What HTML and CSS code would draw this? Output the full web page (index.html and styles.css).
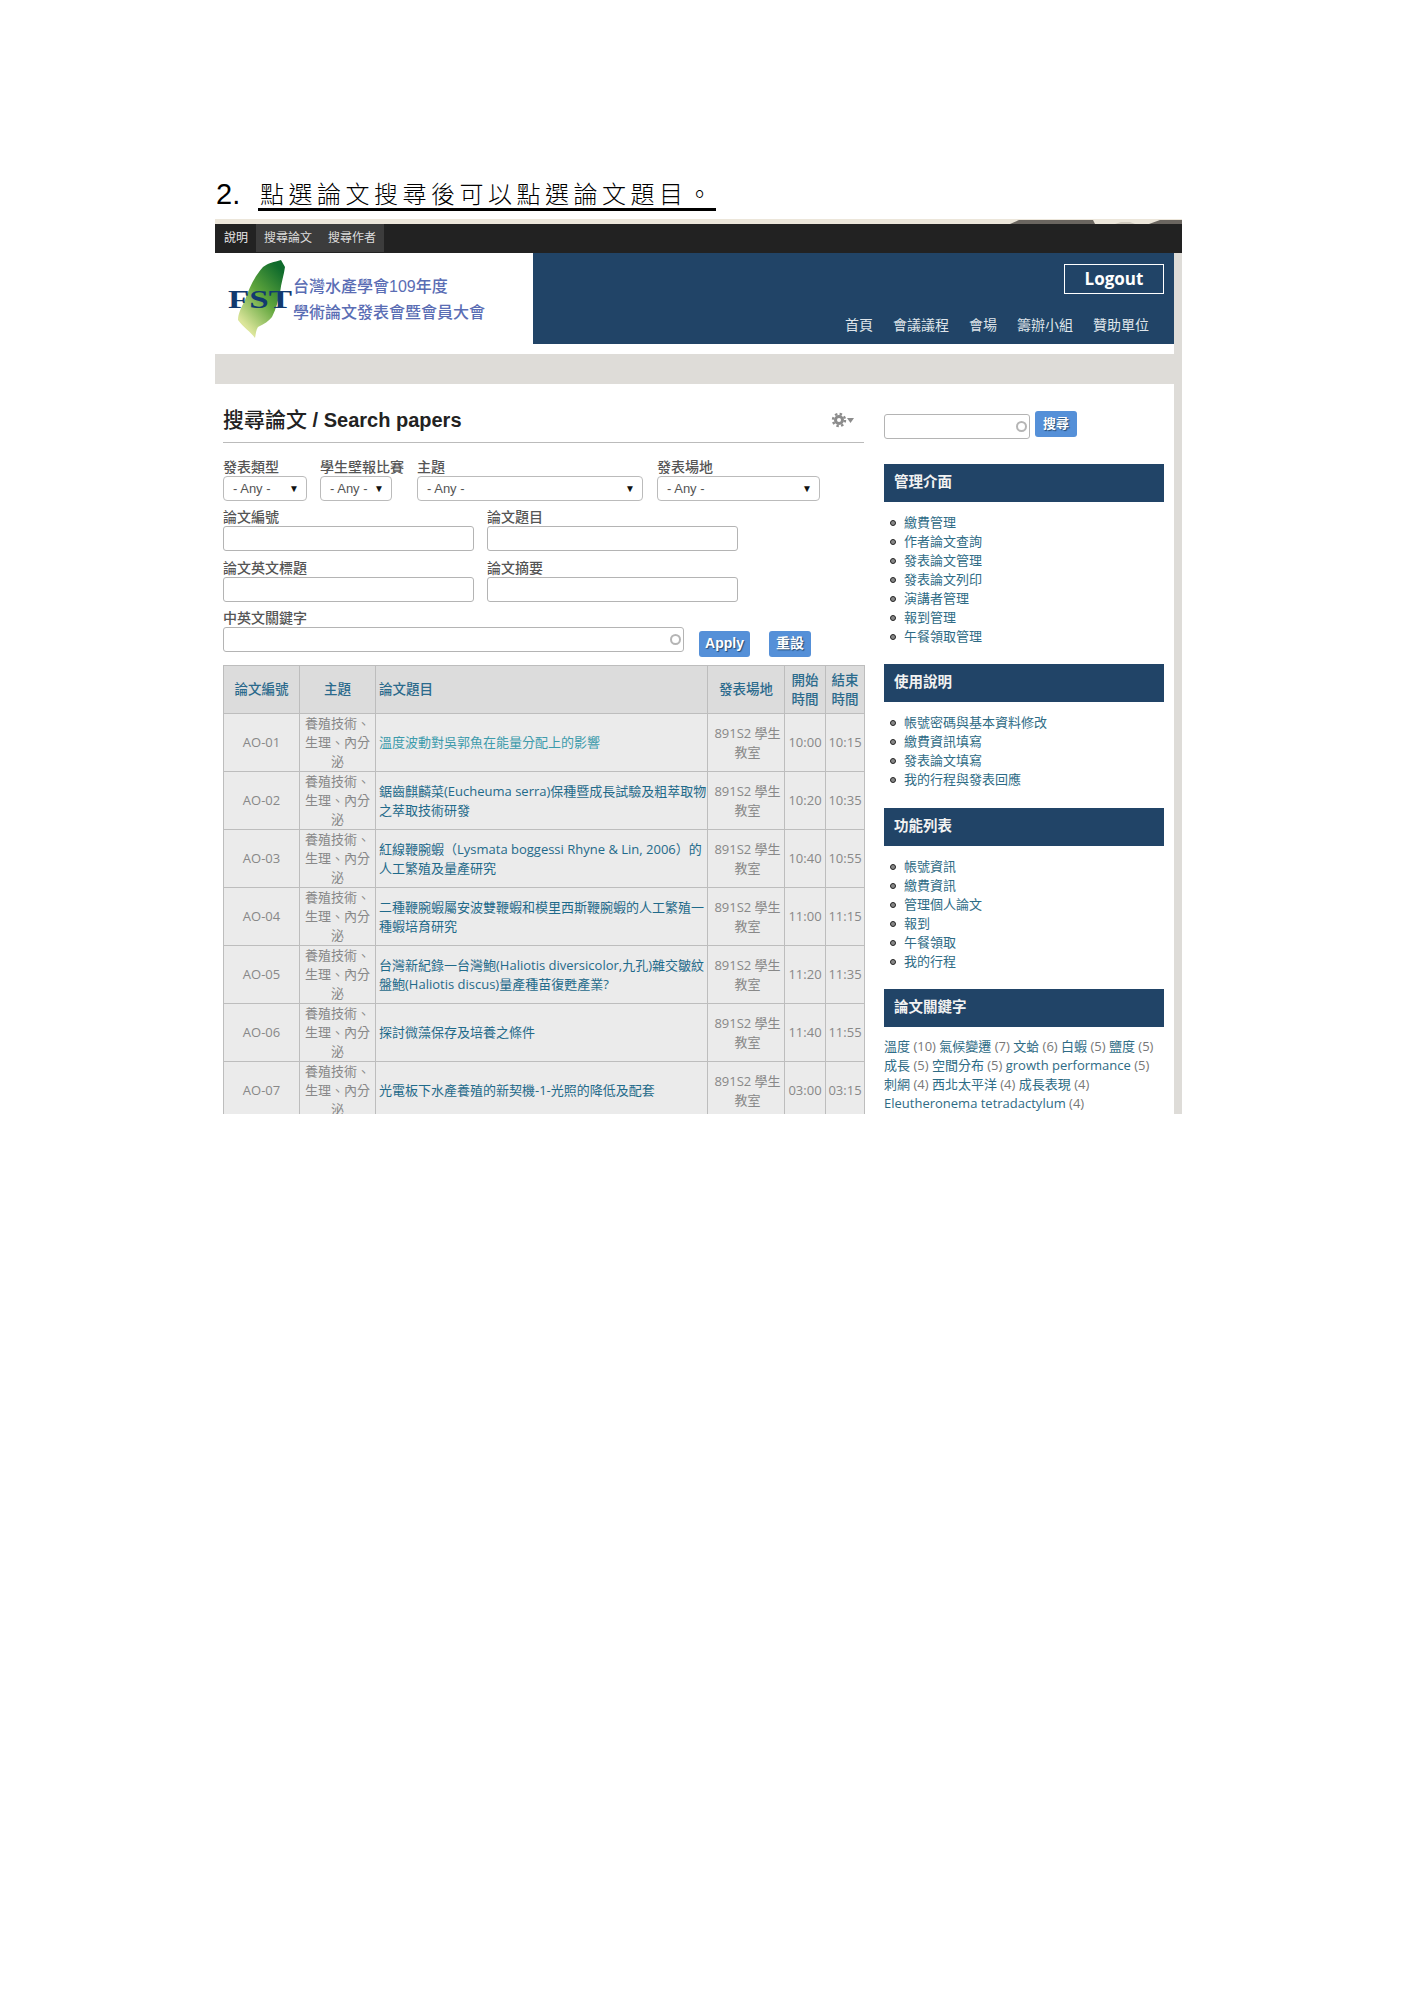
FILE: index.html
```html
<!DOCTYPE html>
<html lang="zh-Hant">
<head>
  <meta charset="UTF-8">
  <title>搜尋論文 / Search papers</title>
  <link rel="stylesheet" href="styles.css">
</head>
<body>
  <div class="sheet">
    <div class="doc-title">
      <span class="doc-num">2.</span>
      <span class="doc-text">點選論文搜尋後可以點選論文題目。</span>
    </div>

    <div class="web">
      <svg class="top-band" width="967" height="5" viewBox="0 0 967 5">
        <polygon points="795,5 804,1 878,1 880,5" fill="#6b6660"/>
        <polygon points="900,5 906,3 915,3 920,5" fill="#cfc9bd"/>
        <polygon points="934,5 945,1 967,1 967,5" fill="#6b6660"/>
      </svg>
      <div class="black-bar">
        <a class="tab">說明</a>
        <div class="tab-group">
          <a class="tab">搜尋論文</a>
          <a class="tab">搜尋作者</a>
        </div>
      </div>

      <div class="inner">
        <div class="header">
          <div class="logo">
            <svg class="logo-mark" width="67" height="91" viewBox="0 0 67 91">
              <defs>
                <linearGradient id="tw" x1="0.8" y1="0.05" x2="0.25" y2="0.9">
                  <stop offset="0" stop-color="#0f6b2c"/>
                  <stop offset="0.5" stop-color="#5fa53c"/>
                  <stop offset="1" stop-color="#dbe59a"/>
                </linearGradient>
              </defs>
              <path d="M55 7 C48 9 42 10 37 14 C28 24 23 36 19 47 C15 55 12 61 12 67 C17 74 25 79 29 85 C30 80 30 77 32 74 C38 71 43 68 46 64 C50 56 52 48 54 40 C55 30 58 22 59 14 Z" fill="url(#tw)"/>
              <text class="logo-fst" x="2" y="55" textLength="64" lengthAdjust="spacingAndGlyphs">FST</text>
            </svg>
            <div class="logo-text">
              <div>台灣水產學會109年度</div>
              <div>學術論文發表會暨會員大會</div>
            </div>
          </div>
          <div class="header-blue">
            <a class="logout">Logout</a>
            <div class="main-nav">
              <a>首頁</a><a>會議議程</a><a>會場</a><a>籌辦小組</a><a>贊助單位</a>
            </div>
          </div>
        </div>
        <div class="gray-band"></div>

        <div class="columns">
          <div class="content">
            <div class="page-title">
              <h1><span class="title-cjk">搜尋論文</span> / Search papers</h1>
              <svg class="gear" width="24" height="16" viewBox="0 0 24 16">
                <circle cx="8" cy="8" r="3.5" fill="none" stroke="#8c8c8c" stroke-width="3"/>
                <circle cx="8" cy="8" r="6" fill="none" stroke="#8c8c8c" stroke-width="2.4" stroke-dasharray="2.4 2.3"/>
                <polygon points="16,6 23,6 19.5,11" fill="#8c8c8c"/>
              </svg>
            </div>

            <div class="filters">
              <div class="row">
                <div class="field f-type"><label>發表類型</label><div class="select"><span>- Any -</span><i>▼</i></div></div>
                <div class="field f-poster"><label>學生壁報比賽</label><div class="select"><span>- Any -</span><i>▼</i></div></div>
                <div class="field f-topic"><label>主題</label><div class="select"><span>- Any -</span><i>▼</i></div></div>
                <div class="field f-place"><label>發表場地</label><div class="select"><span>- Any -</span><i>▼</i></div></div>
              </div>
              <div class="row row-text">
                <div class="field f-half"><label>論文編號</label><input type="text"></div>
                <div class="field f-half"><label>論文題目</label><input type="text"></div>
              </div>
              <div class="row row-text row-tall">
                <div class="field f-half"><label>論文英文標題</label><input type="text"></div>
                <div class="field f-half"><label>論文摘要</label><input type="text"></div>
              </div>
              <div class="row row-text">
                <div class="field f-keyword">
                  <label>中英文關鍵字</label>
                  <div class="input-wrap"><input type="text"><span class="spinner"></span></div>
                </div>
                <a class="btn btn-apply">Apply</a>
                <a class="btn btn-reset">重設</a>
              </div>
            </div>

            <table class="papers">
              <colgroup>
                <col class="c-id"><col class="c-topic"><col class="c-title"><col class="c-place"><col class="c-start"><col class="c-end">
              </colgroup>
              <thead>
                <tr>
                  <th>論文編號</th><th>主題</th><th class="left">論文題目</th><th>發表場地</th><th>開始<br>時間</th><th>結束<br>時間</th>
                </tr>
              </thead>
              <tbody>
                <tr>
                  <td>AO-01</td><td><div class="clip">養殖技術、生理、內分泌</div></td>
                  <td class="left"><a class="visited">溫度波動對吳郭魚在能量分配上的影響</a></td>
                  <td class="place">891S2 學生教室</td><td>10:00</td><td>10:15</td>
                </tr>
                <tr>
                  <td>AO-02</td><td><div class="clip">養殖技術、生理、內分泌</div></td>
                  <td class="left"><a>鋸齒麒麟菜(Eucheuma serra)保種暨成長試驗及粗萃取物之萃取技術研發</a></td>
                  <td class="place">891S2 學生教室</td><td>10:20</td><td>10:35</td>
                </tr>
                <tr>
                  <td>AO-03</td><td><div class="clip">養殖技術、生理、內分泌</div></td>
                  <td class="left"><a>紅線鞭腕蝦（Lysmata boggessi Rhyne &amp; Lin, 2006）的人工繁殖及量產研究</a></td>
                  <td class="place">891S2 學生教室</td><td>10:40</td><td>10:55</td>
                </tr>
                <tr>
                  <td>AO-04</td><td><div class="clip">養殖技術、生理、內分泌</div></td>
                  <td class="left"><a>二種鞭腕蝦屬安波雙鞭蝦和模里西斯鞭腕蝦的人工繁殖一種蝦培育研究</a></td>
                  <td class="place">891S2 學生教室</td><td>11:00</td><td>11:15</td>
                </tr>
                <tr>
                  <td>AO-05</td><td><div class="clip">養殖技術、生理、內分泌</div></td>
                  <td class="left"><a>台灣新紀錄一台灣鮑(Haliotis diversicolor,九孔)雜交皺紋盤鮑(Haliotis discus)量產種苗復甦產業?</a></td>
                  <td class="place">891S2 學生教室</td><td>11:20</td><td>11:35</td>
                </tr>
                <tr>
                  <td>AO-06</td><td><div class="clip">養殖技術、生理、內分泌</div></td>
                  <td class="left"><a>探討微藻保存及培養之條件</a></td>
                  <td class="place">891S2 學生教室</td><td>11:40</td><td>11:55</td>
                </tr>
                <tr>
                  <td>AO-07</td><td><div class="clip">養殖技術、生理、內分泌</div></td>
                  <td class="left"><a>光電板下水產養殖的新契機-1-光照的降低及配套</a></td>
                  <td class="place">891S2 學生教室</td><td>03:00</td><td>03:15</td>
                </tr>
              </tbody>
            </table>
          </div>

          <div class="sidebar">
            <div class="side-search">
              <div class="input-wrap"><input type="text"><span class="spinner"></span></div>
              <a class="btn btn-search">搜尋</a>
            </div>

            <h2>管理介面</h2>
            <ul>
              <li>繳費管理</li><li>作者論文查詢</li><li>發表論文管理</li><li>發表論文列印</li><li>演講者管理</li><li>報到管理</li><li>午餐領取管理</li>
            </ul>

            <h2>使用說明</h2>
            <ul class="loose">
              <li>帳號密碼與基本資料修改</li><li>繳費資訊填寫</li><li>發表論文填寫</li><li>我的行程與發表回應</li>
            </ul>

            <h2>功能列表</h2>
            <ul>
              <li>帳號資訊</li><li>繳費資訊</li><li>管理個人論文</li><li>報到</li><li>午餐領取</li><li>我的行程</li>
            </ul>

            <h2>論文關鍵字</h2>
            <div class="tags">
              <a>溫度</a> (10) <a>氣候變遷</a> (7) <a>文蛤</a> (6) <a>白蝦</a> (5) <a>鹽度</a> (5)<br>
              <a>成長</a> (5) <a>空間分布</a> (5) <a>growth performance</a> (5)<br>
              <a>刺網</a> (4) <a>西北太平洋</a> (4) <a>成長表現</a> (4)<br>
              <a>Eleutheronema tetradactylum</a> (4)
            </div>
          </div>
        </div>
      </div>
    </div>
  </div>
</body>
</html>
```

FILE: styles.css
```css
html, body {
  margin: 0;
  padding: 0;
  background: #fff;
}

body {
  height: 2012px;
  overflow: hidden;
  font-family: "Liberation Sans", "Noto Sans CJK TC", sans-serif;
}

.sheet {
  padding-left: 215px;
}

.doc-title {
  height: 41px;
  padding-top: 170px;
  padding-bottom: 8px;
  display: flex;
  align-items: flex-end;
  color: #000;
}

.doc-num {
  width: 43px;
  padding-left: 1px;
  box-sizing: border-box;
  font-size: 29px;
  line-height: 33px;
}

.doc-text {
  font-family: "Noto Sans CJK TC", sans-serif;
  font-size: 24px;
  font-weight: 300;
  line-height: 30px;
  letter-spacing: 4.5px;
  padding-left: 2px;
  border-bottom: 3px solid #000;
}

.web {
  width: 967px;
  height: 895px;
  overflow: hidden;
}

.top-band {
  display: block;
  background: #ece6da;
}

.black-bar {
  height: 29px;
  background: #222;
  display: flex;
  font-size: 12px;
  line-height: 28px;
}

.tab {
  padding: 0 8px 0 9px;
  color: #e8e8e8;
}

.tab-group {
  display: flex;
  height: 28px;
  background: #3c3c3c;
}

.tab-group .tab {
  padding: 0 8px;
  color: #ddd;
}

.inner {
  border-right: 8px solid #dedcd8;
  height: 861px;
}

.header {
  height: 91px;
  display: flex;
}

.logo {
  width: 318px;
  padding-left: 11px;
  box-sizing: border-box;
  display: flex;
  align-items: center;
}

.logo-mark {
  flex: none;
}

.logo-fst {
  font-family: "Liberation Serif", serif;
  font-weight: bold;
  font-size: 26px;
  fill: #123a6f;
}

.logo-text {
  font-size: 16px;
  font-weight: 500;
  line-height: 26px;
  color: #5a6db4;
  margin-top: 3px;
}

.header-blue {
  flex: 1;
  background: #214467;
  padding: 11px 10px 0 0;
  display: flex;
  flex-direction: column;
  align-items: flex-end;
}

.logout {
  width: 100px;
  height: 30px;
  box-sizing: border-box;
  border: 1px solid #fff;
  font-family: "Open Sans", sans-serif;
  font-weight: 700;
  font-size: 17px;
  line-height: 27px;
  text-align: center;
  color: #fff;
}

.main-nav {
  display: flex;
  gap: 20px;
  margin-top: 21px;
  padding-right: 15px;
  font-size: 14px;
  line-height: 20px;
  color: #dfe5ea;
}

.gray-band {
  height: 30px;
  margin: 10px -8px 0 0;
  background: #dedcd8;
}

.columns {
  display: flex;
  gap: 20px;
  padding: 0 10px 0 8px;
  height: 730px;
  overflow: hidden;
}

.content {
  width: 641px;
  flex: none;
}

.page-title {
  height: 59px;
  box-sizing: border-box;
  padding-top: 23px;
  border-bottom: 1px solid #bbb;
  display: flex;
  justify-content: space-between;
  align-items: flex-start;
}

.page-title h1 {
  margin: 0;
  font-size: 20px;
  line-height: 26px;
  font-weight: bold;
  color: #222;
}

.title-cjk {
  font-size: 21px;
  font-weight: 500;
}

.gear {
  margin: 5px 9px 0 0;
}

.filters {
  padding-top: 15px;
}

.row {
  display: flex;
  align-items: flex-end;
}

.row-text {
  margin-top: 7px;
  gap: 13px;
}

.row-tall {
  margin-top: 8px;
}

.field label {
  display: block;
  height: 18px;
  font-size: 14px;
  line-height: 18px;
  font-weight: 500;
  white-space: nowrap;
  color: #555;
}

.f-type { width: 84px; margin-right: 13px; }
.f-poster { width: 72px; margin-right: 25px; }
.f-topic { width: 226px; margin-right: 14px; }
.f-place { width: 163px; }
.f-half { width: 251px; }
.f-keyword { width: 461px; }

.select {
  height: 25px;
  box-sizing: border-box;
  border: 1px solid #bbb;
  border-radius: 4px;
  padding: 0 7px 0 9px;
  display: flex;
  justify-content: space-between;
  font-size: 13px;
  line-height: 23px;
  color: #555;
}

.select i {
  font-style: normal;
  font-size: 10px;
  color: #111;
}

input {
  display: block;
  width: 100%;
  height: 25px;
  box-sizing: border-box;
  padding: 0;
  border: 1px solid #b4b4b4;
  border-radius: 3px;
  background: #fff;
}

.input-wrap {
  position: relative;
}

.spinner {
  position: absolute;
  right: 3px;
  top: 7px;
  width: 11px;
  height: 11px;
  box-sizing: border-box;
  border: 2px solid #b5b5b5;
  border-radius: 50%;
}

.btn {
  display: block;
  box-sizing: border-box;
  border-radius: 3px;
  background: #5590d8;
  color: #fff;
  font-weight: bold;
  font-size: 14px;
  text-align: center;
  text-shadow: 1px 1px 1px #23486f;
}

.btn-apply {
  width: 51px;
  height: 26px;
  line-height: 25px;
  margin: 0 0 -5px 2px;
}

.btn-reset {
  width: 42px;
  height: 26px;
  line-height: 25px;
  margin: 0 0 -5px 6px;
}

.papers {
  width: 641px;
  margin-top: 13px;
  table-layout: fixed;
  border-collapse: collapse;
  font-family: "Open Sans", "Noto Sans CJK TC", sans-serif;
  font-size: 13px;
  line-height: 19px;
  color: #888;
  background: #ebebeb;
}

.c-id { width: 76px; }
.c-topic { width: 76px; }
.c-title { width: 332px; }
.c-place { width: 77px; }
.c-start { width: 41px; }
.c-end { width: 39px; }

.papers th, .papers td {
  border: 1px solid #bdbdbd;
  padding: 0;
  text-align: center;
  overflow: hidden;
}

.papers thead tr {
  height: 48px;
}

.papers tbody tr {
  height: 58px;
}

.papers th {
  background: #dcdcdc;
  color: #2b6a8c;
  font-size: 13.5px;
  font-weight: 500;
}

.papers .left {
  text-align: left;
  padding-left: 3px;
}

.papers .place {
  padding-left: 3px;
}

.clip {
  height: 57px;
  padding: 0 4px;
  overflow: hidden;
}

.papers a {
  color: #1f6a8a;
}

.papers a.visited {
  color: #3d9bab;
}

.sidebar {
  width: 280px;
  flex: none;
}

.side-search {
  display: flex;
  gap: 5px;
  padding-top: 27px;
  height: 80px;
  box-sizing: border-box;
}

.side-search .input-wrap {
  width: 146px;
  margin-top: 3px;
}

.btn-search {
  width: 42px;
  height: 26px;
  line-height: 26px;
  font-size: 13px;
}

.sidebar h2 {
  margin: 0;
  height: 38px;
  padding-left: 10px;
  background: #214467;
  color: #f2f2f2;
  font-size: 14.5px;
  font-weight: bold;
  line-height: 37px;
}

.sidebar ul {
  list-style: none;
  margin: 0;
  padding: 11px 0 18px 0;
}

.sidebar ul.loose {
  padding-bottom: 19px;
}

.sidebar li {
  position: relative;
  padding-left: 20px;
  font-size: 13px;
  line-height: 19px;
  color: #2e6b85;
}

.sidebar li::before {
  content: "";
  position: absolute;
  left: 6px;
  top: 7px;
  width: 6px;
  height: 6px;
  box-sizing: border-box;
  border: 1px solid #222;
  border-radius: 50%;
  background: #888;
}

.tags {
  padding-top: 10px;
  font-family: "Open Sans", "Noto Sans CJK TC", sans-serif;
  font-size: 13px;
  line-height: 19px;
  color: #777;
  white-space: nowrap;
}

.tags a {
  color: #2e6b85;
}
```
